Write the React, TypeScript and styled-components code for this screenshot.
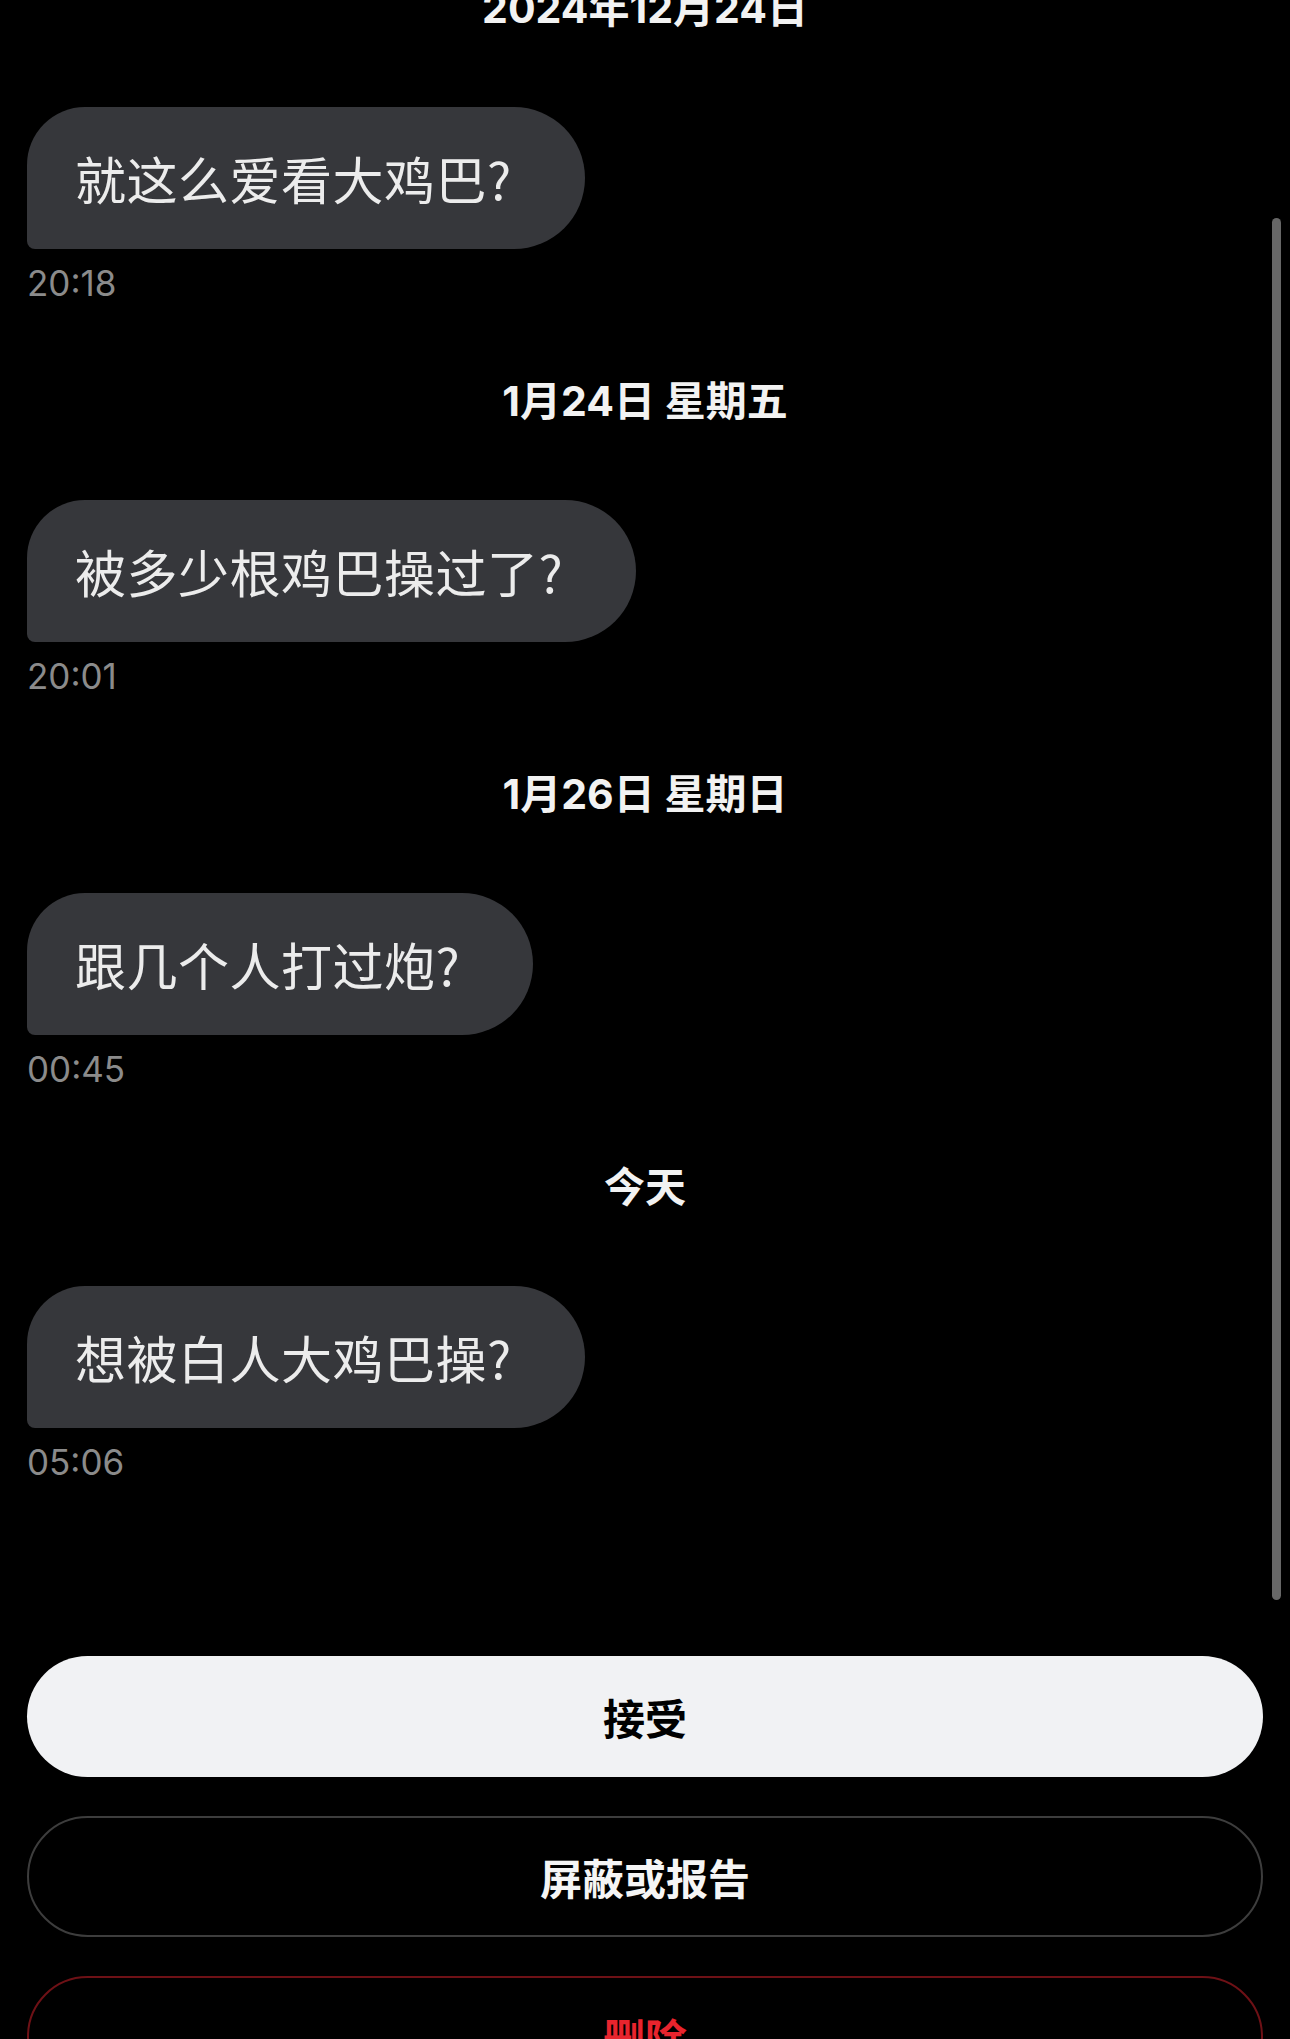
import React from 'react';
import styled, { createGlobalStyle } from 'styled-components';

const GlobalStyle = createGlobalStyle`
  html, body {
    margin: 0;
    padding: 0;
    background: #000;
  }
  * {
    box-sizing: border-box;
  }
`;

const Page = styled.div`
  width: 1290px;
  height: 2039px;
  overflow: hidden;
  background: #000;
  display: flex;
  flex-direction: column;
  font-family: "Inter", "Noto Sans CJK SC", sans-serif;
`;

const MessageArea = styled.div`
  position: relative;
  height: 1623px;
  flex-shrink: 0;
  overflow: hidden;
`;

const MessageList = styled.div`
  display: flex;
  flex-direction: column;
  margin-top: -16px;
  padding: 0 27px;
`;

const Group = styled.div`
  display: flex;
  flex-direction: column;
  align-items: flex-start;
  & + & {
    margin-top: 73px;
  }
`;

const DateLabel = styled.div`
  align-self: stretch;
  text-align: center;
  color: #f2f2f2;
  font-size: 41px;
  line-height: 48px;
  font-weight: 700;
  margin-bottom: 75px;
`;

const Bubble = styled.div`
  height: 142px;
  display: flex;
  align-items: center;
  padding: 0 73px 0 48px;
  background: #36373b;
  border-radius: 58px 71px 71px 8px;
  color: #ececec;
  font-family: "Noto Sans CJK SC", sans-serif;
  font-size: 51px;
  font-weight: 400;
  letter-spacing: 0.5px;
`;

const Time = styled.div`
  margin-top: 13px;
  color: #8b8b8b;
  font-size: 35px;
  line-height: 42px;
  font-weight: 400;
`;

const Scrollbar = styled.div`
  position: absolute;
  right: 9px;
  top: 218px;
  width: 9px;
  height: 1382px;
  border-radius: 5px;
  background: #676767;
`;

const Actions = styled.div`
  display: flex;
  flex-direction: column;
  gap: 39px;
  padding: 33px 27px 0;
`;

const ActionButton = styled.button<{ $variant: 'primary' | 'outline' | 'danger' }>`
  height: 121px;
  width: 100%;
  flex-shrink: 0;
  border-radius: 61px;
  font-family: "Inter", "Noto Sans CJK SC", sans-serif;
  font-size: 42px;
  font-weight: 700;
  cursor: pointer;
  background: ${(p) => (p.$variant === 'primary' ? '#f1f2f4' : '#000')};
  color: ${(p) => (p.$variant === 'primary' ? '#000' : p.$variant === 'danger' ? '#e8242d' : '#f5f5f5')};
  border: ${(p) =>
    p.$variant === 'primary' ? 'none' : p.$variant === 'danger' ? '2.5px solid #6e1116' : '2.5px solid #3d3d3d'};
`;

const messages = [
  { date: '2024年12月24日', text: '就这么爱看大鸡巴?', time: '20:18' },
  { date: '1月24日 星期五', text: '被多少根鸡巴操过了?', time: '20:01' },
  { date: '1月26日 星期日', text: '跟几个人打过炮?', time: '00:45' },
  { date: '今天', text: '想被白人大鸡巴操?', time: '05:06' },
];

export default function App() {
  return (
    <Page>
      <GlobalStyle />
      <MessageArea>
        <MessageList>
          {messages.map((m) => (
            <Group key={m.time}>
              <DateLabel>{m.date}</DateLabel>
              <Bubble>{m.text}</Bubble>
              <Time>{m.time}</Time>
            </Group>
          ))}
        </MessageList>
        <Scrollbar />
      </MessageArea>
      <Actions>
        <ActionButton $variant="primary">接受</ActionButton>
        <ActionButton $variant="outline">屏蔽或报告</ActionButton>
        <ActionButton $variant="danger">删除</ActionButton>
      </Actions>
    </Page>
  );
}
